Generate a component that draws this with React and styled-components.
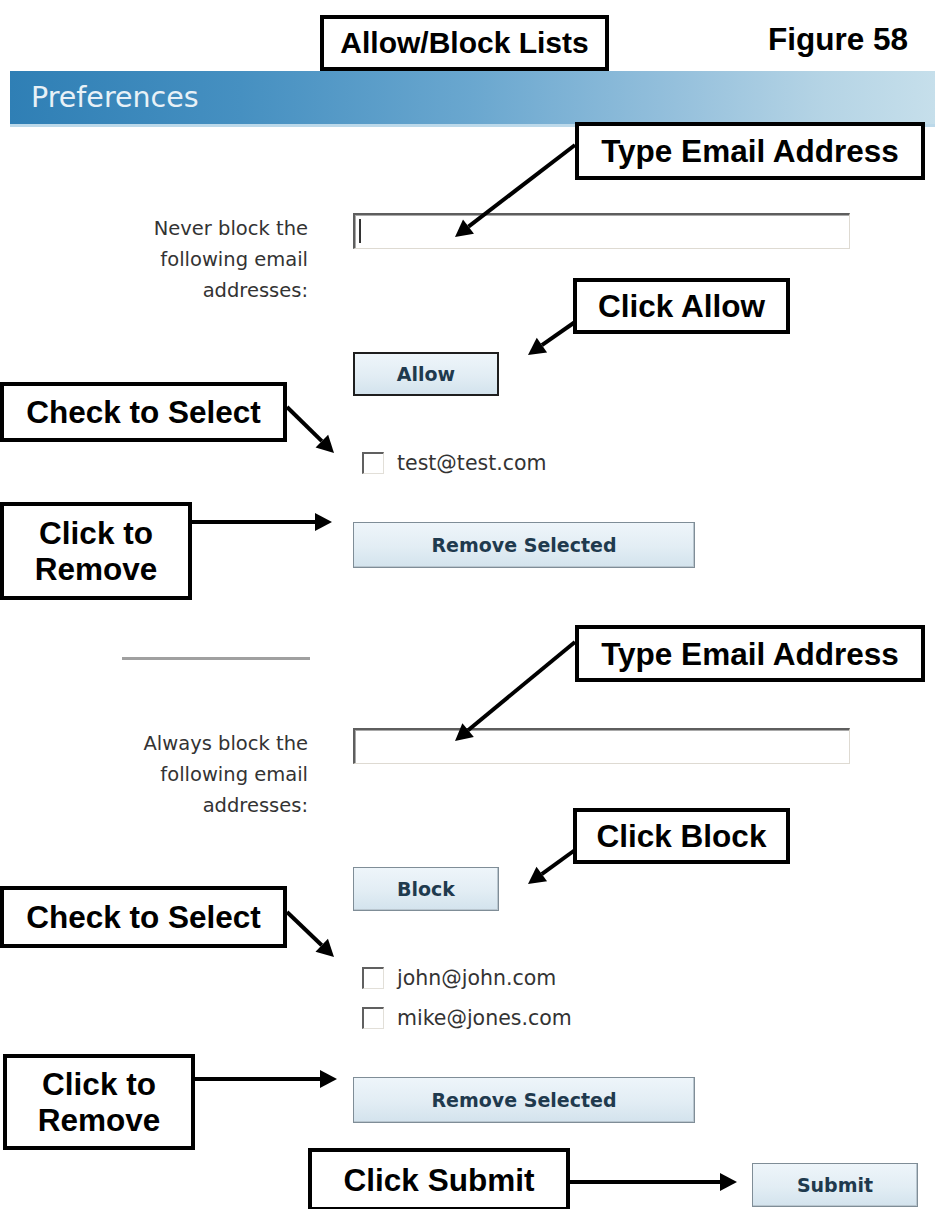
import React from "react";
import styled, { createGlobalStyle } from "styled-components";

const GlobalStyle = createGlobalStyle`
  body {
    margin: 0;
    background: #ffffff;
  }
`;

const callouts = [
  { id: "type1", top: 122, left: 575, width: 350, height: 58, text: ["Type Email Address"] },
  { id: "allow", top: 278, left: 573, width: 217, height: 56, text: ["Click Allow"] },
  { id: "check1", top: 382, left: 0, width: 287, height: 60, text: ["Check to Select"] },
  { id: "remove1", top: 502, left: 0, width: 192, height: 98, text: ["Click to", "Remove"] },
  { id: "type2", top: 625, left: 575, width: 350, height: 57, text: ["Type Email Address"] },
  { id: "block", top: 808, left: 573, width: 217, height: 56, text: ["Click Block"] },
  { id: "check2", top: 886, left: 0, width: 287, height: 62, text: ["Check to Select"] },
  { id: "remove2", top: 1054, left: 3, width: 192, height: 96, text: ["Click to", "Remove"] },
  { id: "submit", top: 1148, left: 308, width: 262, height: 63, text: ["Click Submit"] },
];

const arrows = [
  [575, 145, 455, 237],
  [575, 322, 528, 355],
  [287, 407, 334, 453],
  [192, 522, 332, 522],
  [575, 642, 455, 741],
  [575, 850, 528, 884],
  [287, 912, 334, 957],
  [195, 1079, 337, 1079],
  [570, 1182, 737, 1182],
];

const sections = [
  {
    label: ["Never block the", "following email", "addresses:"],
    action: "Allow",
    focused: true,
    emails: ["test@test.com"],
  },
  {
    label: ["Always block the", "following email", "addresses:"],
    action: "Block",
    focused: false,
    emails: ["john@john.com", "mike@jones.com"],
  },
];

// arrow head points, tip at (x2, y2)
const headPoints = (x1, y1, x2, y2, len = 17, half = 9) => {
  const d = Math.hypot(x2 - x1, y2 - y1);
  const ux = (x2 - x1) / d;
  const uy = (y2 - y1) / d;
  const bx = x2 - ux * len;
  const by = y2 - uy * len;
  return {
    base: [bx, by],
    points: `${x2},${y2} ${bx - uy * half},${by + ux * half} ${bx + uy * half},${by - ux * half}`,
  };
};

const App = () => {
  return (
    <Page>
      <GlobalStyle />
      <Header>
        <TitleBox>Allow/Block Lists</TitleBox>
        <FigureLabel>Figure 58</FigureLabel>
      </Header>
      <Banner>Preferences</Banner>

      <Form>
        {sections.map((s, i) => (
          <React.Fragment key={s.action}>
            {i > 0 && <Divider />}
            <Section>
              <FieldLabel>
                {s.label.map((line) => (
                  <div key={line}>{line}</div>
                ))}
              </FieldLabel>
              <Controls>
                <TextField>{s.focused && <Caret />}</TextField>
                <ActionButton $focused={s.focused} $width={146}>
                  {s.action}
                </ActionButton>
                <CheckList>
                  {s.emails.map((email) => (
                    <CheckRow key={email}>
                      <CheckBox />
                      {email}
                    </CheckRow>
                  ))}
                </CheckList>
                <RemoveButton>Remove Selected</RemoveButton>
              </Controls>
            </Section>
          </React.Fragment>
        ))}
        <SubmitRow>
          <ActionButton $width={166}>Submit</ActionButton>
        </SubmitRow>
      </Form>

      <ArrowLayer width="935" height="1209" viewBox="0 0 935 1209">
        {arrows.map(([x1, y1, x2, y2]) => {
          const h = headPoints(x1, y1, x2, y2);
          return (
            <g key={`${x1}-${y1}`}>
              <line x1={x1} y1={y1} x2={h.base[0]} y2={h.base[1]} stroke="#000" strokeWidth="4" />
              <polygon points={h.points} fill="#000" />
            </g>
          );
        })}
      </ArrowLayer>

      {callouts.map((c) => (
        <Callout key={c.id} $top={c.top} $left={c.left} $width={c.width} $height={c.height}>
          {c.text.map((line) => (
            <span key={line}>{line}</span>
          ))}
        </Callout>
      ))}
    </Page>
  );
};

const Page = styled.div`
  position: relative;
  width: 935px;
  height: 1209px;
  overflow: hidden;
  background: #fff;
`;

const Header = styled.div`
  display: flex;
  align-items: flex-end;
  height: 71px;
  padding-left: 320px;
  padding-right: 27px;
  box-sizing: border-box;
`;

const TitleBox = styled.div`
  height: 56px;
  width: 289px;
  box-sizing: border-box;
  border: 4px solid #000;
  display: flex;
  align-items: center;
  justify-content: center;
  font-family: "Liberation Sans", Arial, sans-serif;
  font-weight: bold;
  font-size: 30px;
  color: #000;
  background: #fff;
`;

const FigureLabel = styled.div`
  margin-left: auto;
  align-self: center;
  font-family: "Liberation Sans", Arial, sans-serif;
  font-weight: bold;
  font-size: 31.5px;
  color: #000;
  margin-top: 8px;
`;

const Banner = styled.div`
  margin-left: 10px;
  height: 53px;
  padding-left: 21px;
  display: flex;
  align-items: center;
  font-family: "DejaVu Sans", Verdana, sans-serif;
  font-size: 28.5px;
  color: #e8f1f7;
  background: linear-gradient(
    to right,
    #2f7fb5 0%,
    #4690c1 25%,
    #6aa7cf 50%,
    #95c0dc 72%,
    #b5d4e5 88%,
    #c6dfeb 100%
  );
  border-bottom: 3px solid #bcd9ea;
`;

const Form = styled.div`
  padding-top: 86px;
  font-family: "DejaVu Sans", Verdana, sans-serif;
`;

const Section = styled.div`
  display: grid;
  grid-template-columns: 308px 497px;
  column-gap: 45px;
  align-items: start;
`;

const FieldLabel = styled.div`
  text-align: right;
  font-size: 19.5px;
  line-height: 31px;
  color: #333;
`;

const Controls = styled.div`
  display: flex;
  flex-direction: column;
  align-items: flex-start;
`;

const TextField = styled.div`
  position: relative;
  width: 497px;
  height: 36px;
  box-sizing: border-box;
  background: #fff;
  border-style: solid;
  border-width: 2px 1px 1px 2px;
  border-color: #5e5e5e #dedad2 #dedad2 #5e5e5e;
  box-shadow: inset 1px 1px 0 #a9a9a9;
`;

const Caret = styled.span`
  position: absolute;
  left: 4px;
  top: 4px;
  width: 2px;
  height: 24px;
  background: #333;
`;

const ActionButton = styled.div`
  margin-top: ${(p) => (p.$focused !== undefined ? "103px" : "0")};
  width: ${(p) => p.$width}px;
  height: 44px;
  box-sizing: border-box;
  display: flex;
  align-items: center;
  justify-content: center;
  font-family: "DejaVu Sans", Verdana, sans-serif;
  font-weight: bold;
  font-size: 19px;
  color: #1f3a4e;
  background: linear-gradient(to bottom, #eef5fa 0%, #e2edf4 55%, #d3e3ed 100%);
  border: ${(p) => (p.$focused ? "2px solid #1e1e1e" : "1px solid #7f8d97")};
  box-shadow: ${(p) => (p.$focused ? "none" : "inset -1px -1px 0 #b9c6cf")};
`;

const CheckList = styled.div`
  margin-top: 56px;
  margin-left: 9px;
  display: flex;
  flex-direction: column;
  gap: 18px;
`;

const CheckRow = styled.div`
  display: flex;
  align-items: center;
  gap: 13px;
  height: 22px;
  font-size: 20.5px;
  color: #333;
`;

const CheckBox = styled.span`
  width: 22px;
  height: 22px;
  box-sizing: border-box;
  background: #fff;
  border-style: solid;
  border-width: 2px 1px 1px 2px;
  border-color: #606060 #e2dfd8 #e2dfd8 #606060;
`;

const RemoveButton = styled.div`
  margin-top: 48px;
  width: 342px;
  height: 46px;
  box-sizing: border-box;
  display: flex;
  align-items: center;
  justify-content: center;
  font-weight: bold;
  font-size: 19px;
  color: #1f3a4e;
  background: linear-gradient(to bottom, #eef5fa 0%, #e2edf4 55%, #d3e3ed 100%);
  border: 1px solid #7f8d97;
  box-shadow: inset -1px -1px 0 #b9c6cf;
`;

const Divider = styled.div`
  margin: 89px 0 68px 122px;
  width: 188px;
  height: 3px;
  background: #a0a0a0;
`;

const SubmitRow = styled.div`
  display: flex;
  padding-left: 752px;
  margin-top: 40px;
`;

const ArrowLayer = styled.svg`
  position: absolute;
  top: 0;
  left: 0;
  pointer-events: none;
`;

const Callout = styled.div`
  position: absolute;
  top: ${(p) => p.$top}px;
  left: ${(p) => p.$left}px;
  width: ${(p) => p.$width}px;
  height: ${(p) => p.$height}px;
  box-sizing: border-box;
  border: 4px solid #000;
  background: #fff;
  display: flex;
  flex-direction: column;
  align-items: center;
  justify-content: center;
  font-family: "Liberation Sans", Arial, sans-serif;
  font-weight: bold;
  font-size: 31.5px;
  line-height: 36px;
  color: #000;
`;

export default App;
